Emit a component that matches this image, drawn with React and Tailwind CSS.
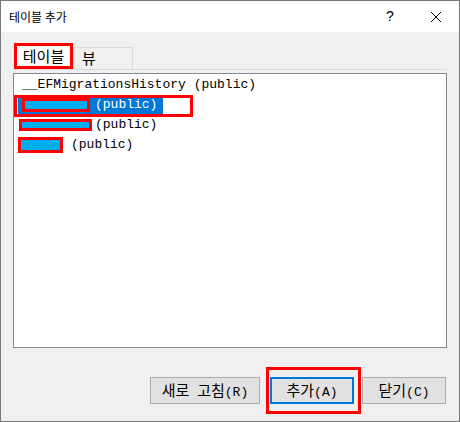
import { Fragment } from "react";

// Hangul glyphs are drawn larger than the ASCII ones, like GulimChe's 2:1 widths
function Mixed({ text }) {
  return (
    <span className="whitespace-pre">
      {text.split(/([가-힣]+)/).map((part, i) =>
        /[가-힣]/.test(part) ? (
          <span key={i} className="text-[15px] font-['Noto_Sans_CJK_KR',sans-serif]">
            {part}
          </span>
        ) : (
          <Fragment key={i}>{part}</Fragment>
        )
      )}
    </span>
  );
}

function Masked({ w, h }) {
  return (
    <span
      className="block shrink-0 border-[3px] border-[#ff0000] bg-[#00aeef]"
      style={{ width: w, height: h }}
    />
  );
}

function Button({ label, wide, isDefault, marked }) {
  return (
    <div className="relative">
      <button
        className={`h-[27px] flex items-center justify-center leading-none text-black bg-[#e1e1e1] ${
          wide ? "w-[110px]" : "w-[84px]"
        } ${isDefault ? "border-2 border-[#0078d7]" : "border border-[#adadad]"}`}
      >
        <Mixed text={label} />
      </button>
      {marked && (
        <div className="absolute left-[-4px] top-[-10px] w-[95px] h-[47px] border-[3px] border-[#ff0000] pointer-events-none" />
      )}
    </div>
  );
}

export default function App() {
  return (
    <div className="w-[460px] h-[422px] border border-[#777777] bg-[#f0f0f0] flex flex-col overflow-hidden font-['Liberation_Mono','Noto_Sans_CJK_KR',monospace] text-[13px] text-black">
      {/* Title bar */}
      <div className="h-[31px] shrink-0 bg-white flex items-center">
        <span className="pl-[8px] text-[12px] font-['Noto_Sans_CJK_KR',sans-serif]">테이블 추가</span>
        <span className="ml-auto w-[46px] text-center text-[14px] font-['Liberation_Sans',sans-serif]">?</span>
        <span className="w-[46px] flex justify-center">
          <svg width="12" height="12" viewBox="0 0 12 12" fill="none" stroke="#000" strokeWidth="1">
            <path d="M1 1L11 11M11 1L1 11" />
          </svg>
        </span>
      </div>

      {/* Body */}
      <div className="flex-1 flex flex-col px-[12px] pt-[11px]">
        {/* Tabs */}
        <div className="h-[26px] flex items-end pl-[1px]">
          <div className="w-[59px] h-[26px] bg-white border-[3px] border-[#ff0000] flex items-center justify-center leading-none">
            <Mixed text="테이블" />
          </div>
          <div className="w-[60px] h-[22px] border border-b-0 border-[#d9d9d9] flex items-center pl-[8px] leading-none">
            <Mixed text="뷰" />
          </div>
        </div>
        <div className="h-px bg-[#d9d9d9]" />

        {/* Table list */}
        <div className="mt-[3px] h-[275px] border border-[#828790] bg-white pt-[1px]">
          <div className="h-[20px] flex items-center pl-[8px]">__EFMigrationsHistory (public)</div>

          <div className="relative h-[20px] flex items-center">
            <div className="ml-[4px] pl-[4px] pr-[6px] h-[18px] flex items-center bg-[#0078d7] text-white">
              <Masked w={68} h={14} />
              <span className="ml-[5px]">(public)</span>
            </div>
            <div className="absolute left-0 top-0 w-[179px] h-[22px] border-[3px] border-[#ff0000]" />
          </div>

          <div className="h-[20px] flex items-center pl-[5px]">
            <Masked w={73} h={12} />
            <span className="ml-[3px]">(public)</span>
          </div>

          <div className="h-[20px] flex items-center pl-[4px]">
            <Masked w={45} h={16} />
            <span className="ml-[8px]">(public)</span>
          </div>
        </div>

        {/* Buttons */}
        <div className="mt-[29px] flex justify-end pr-px">
          <Button label="새로 고침(R)" wide />
          <div className="w-[10px]" />
          <Button label="추가(A)" isDefault marked />
          <div className="w-[8px]" />
          <Button label="닫기(C)" />
        </div>
      </div>
    </div>
  );
}
